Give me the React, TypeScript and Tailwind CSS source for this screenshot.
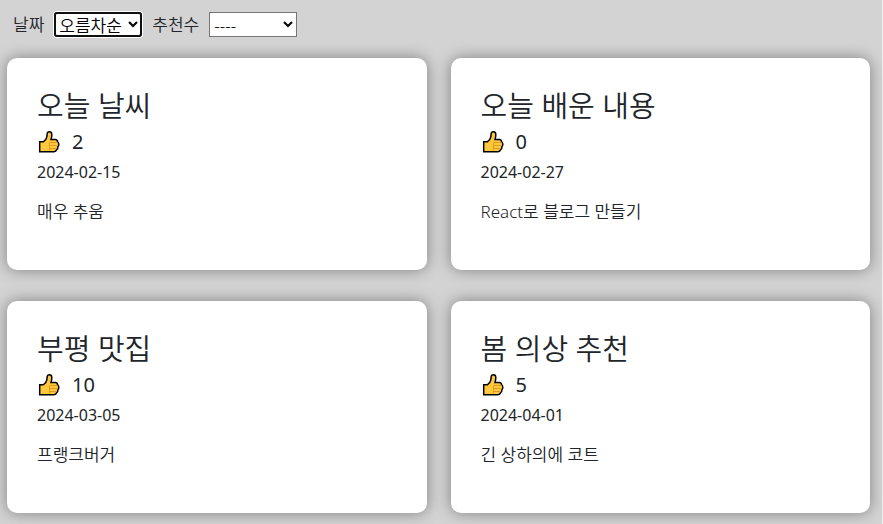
import { useMemo, useState } from 'react';

type Order = '' | 'asc' | 'desc';

interface Post {
  id: number;
  title: string;
  likes: number;
  date: string;
  content: string;
}

const POSTS: Post[] = [
  { id: 1, title: '오늘 날씨', likes: 2, date: '2024-02-15', content: '매우 추움' },
  { id: 2, title: '오늘 배운 내용', likes: 0, date: '2024-02-27', content: 'React로 블로그 만들기' },
  { id: 3, title: '부평 맛집', likes: 10, date: '2024-03-05', content: '프랭크버거' },
  { id: 4, title: '봄 의상 추천', likes: 5, date: '2024-04-01', content: '긴 상하의에 코트' },
];

function ThumbIcon() {
  return (
    <svg viewBox="0 0 23 23" className="size-[23px]" aria-hidden="true">
      <path
        d="M2.7 11.7h3.8c1.9-1.200 2.900-2.900 3.300-4.900l.4-3.200c.1-1.200.9-1.900 2.100-1.900 1.600 0 2.500 1 2.500 2.700 0 1.900-.2 3.500-.8 5.200h4.200c1.400 0 2.200.8 2.300 1.900.9.6 1.300 1.500 1.300 2.700 0 1.100-.3 1.900-.9 2.500.1 1.500-.4 2.500-1.300 3-.3 1.300-1.200 2-2.700 2H2.700z"
        fill="#ffc83d"
        stroke="#000"
        strokeWidth="1.5"
        strokeLinejoin="miter"
      />
      <path d="M12.5 12.5h7.5M12.5 15.5h8M12.5 18.5h7M12.5 12.5v8" fill="none" stroke="#e39b1c" strokeWidth="1" />
    </svg>
  );
}

interface OrderSelectProps {
  id: string;
  label: string;
  value: Order;
  autoFocus?: boolean;
  onChange: (value: Order) => void;
}

function OrderSelect({ id, label, value, autoFocus, onChange }: OrderSelectProps) {
  return (
    <div className="flex items-center gap-2.5 text-[17px] font-[350]">
      <label htmlFor={id}>{label}</label>
      <select
        id={id}
        value={value}
        autoFocus={autoFocus}
        onChange={(event) => onChange(event.target.value as Order)}
        className="h-[25px] w-[88px] border border-[#767676] bg-white text-black -outline-offset-2 outline-[#101010] focus:rounded-[3px] focus:ring-1 focus:ring-white focus:outline-2"
      >
        <option value="">----</option>
        <option value="asc">오름차순</option>
        <option value="desc">내림차순</option>
      </select>
    </div>
  );
}

function PostCard({ post }: { post: Post }) {
  return (
    <article className="rounded-[10px] bg-white p-[30px] shadow-[0_0_15px_#808080]">
      <h2 className="text-[29px] leading-9 font-[350]">{post.title}</h2>
      <div className="flex items-center gap-3 text-[20px] leading-9">
        <ThumbIcon />
        <span>{post.likes}</span>
      </div>
      <p className="leading-6">{post.date}</p>
      <p className="my-4 text-[17px] leading-6 font-[350]">{post.content}</p>
    </article>
  );
}

export default function App() {
  const [dateOrder, setDateOrder] = useState<Order>('asc');
  const [likeOrder, setLikeOrder] = useState<Order>('');

  const posts = useMemo(() => {
    const sorted = [...POSTS];
    if (dateOrder) {
      sorted.sort((a, b) => a.date.localeCompare(b.date) * (dateOrder === 'asc' ? 1 : -1));
    } else if (likeOrder) {
      sorted.sort((a, b) => (a.likes - b.likes) * (likeOrder === 'asc' ? 1 : -1));
    }
    return sorted;
  }, [dateOrder, likeOrder]);

  function changeDateOrder(value: Order) {
    setDateOrder(value);
    setLikeOrder('');
  }

  function changeLikeOrder(value: Order) {
    setLikeOrder(value);
    setDateOrder('');
  }

  return (
    <main className="min-h-screen border-r border-[#f0f0f0] bg-[#d3d3d3] pt-3 pr-3 pb-2 pl-[7px] font-['Noto_Sans','Noto_Sans_CJK_KR',sans-serif] text-base text-[#212529]">
      <div className="flex gap-2.5 pl-1.5">
        <OrderSelect id="date-order" label="날짜" value={dateOrder} autoFocus onChange={changeDateOrder} />
        <OrderSelect id="like-order" label="추천수" value={likeOrder} onChange={changeLikeOrder} />
      </div>
      <div className="mt-5 grid grid-cols-2 gap-x-6 gap-y-[31px]">
        {posts.map((post) => (
          <PostCard key={post.id} post={post} />
        ))}
      </div>
    </main>
  );
}
